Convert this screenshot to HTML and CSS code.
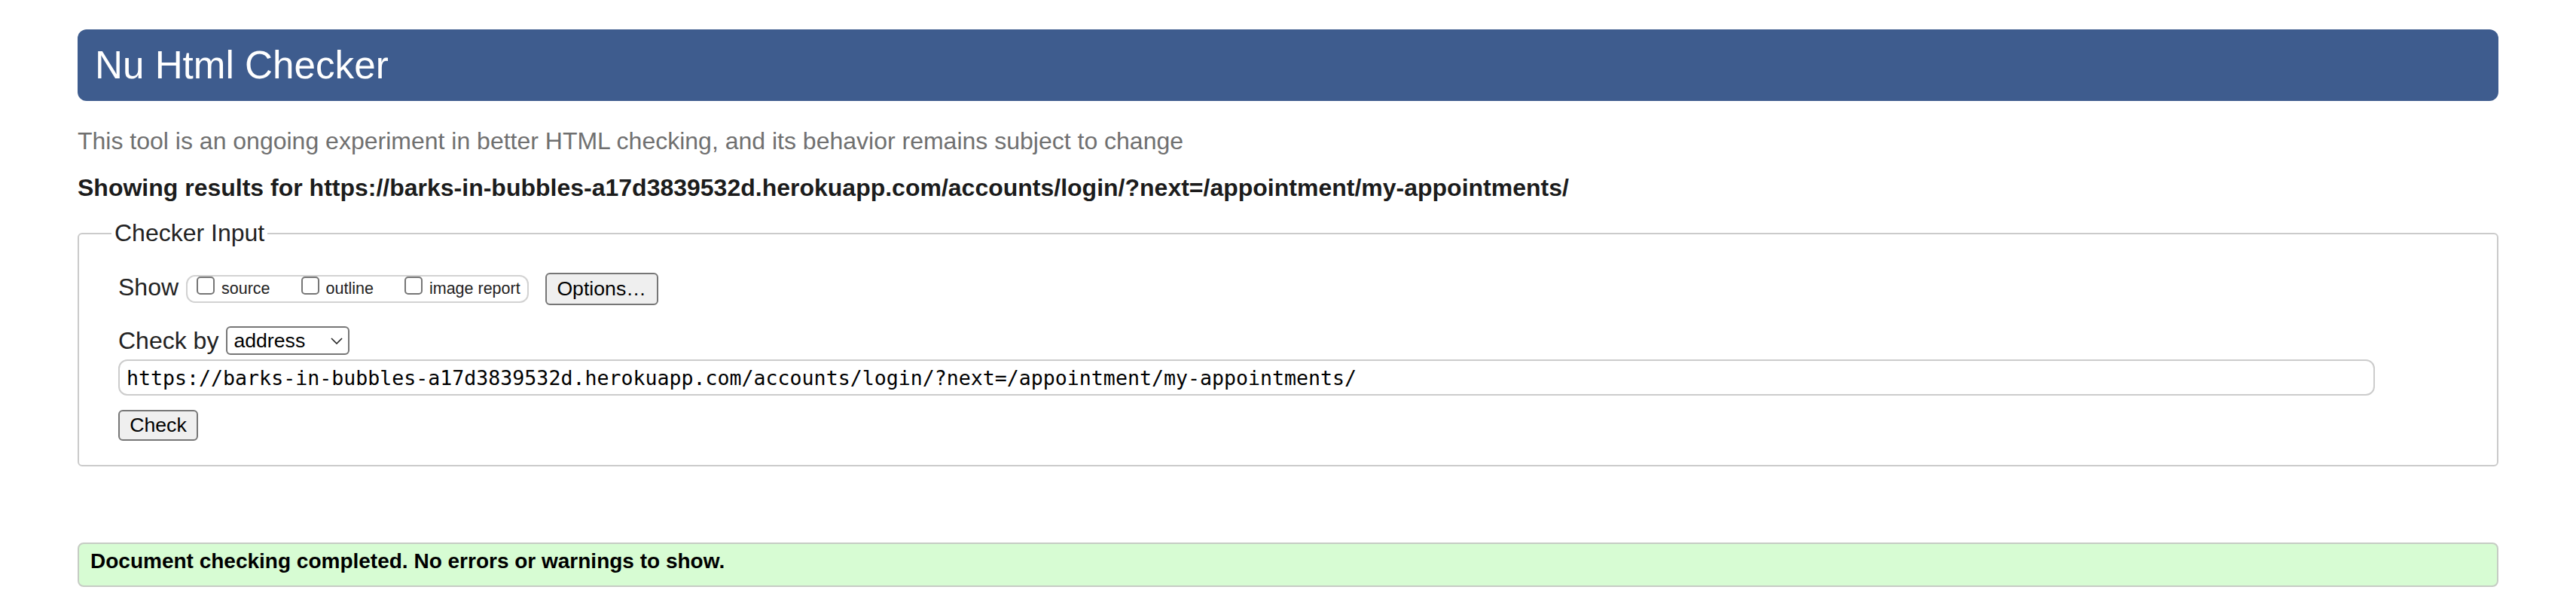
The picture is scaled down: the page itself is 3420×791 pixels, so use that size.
FILE: index.html
```html
<!DOCTYPE html>
<html lang="en">
<head>
<meta charset="utf-8">
<title>Nu Html Checker</title>
<link rel="stylesheet" href="styles.css">
</head>
<body>
<div class="page">
  <h1 class="title">Nu Html Checker</h1>
  <p class="subtitle">This tool is an ongoing experiment in better HTML checking, and its behavior remains subject to change</p>
  <p class="showing">Showing results for https://barks-in-bubbles-a17d3839532d.herokuapp.com/accounts/login/?next=/appointment/my-appointments/</p>
  <form class="checker">
    <fieldset class="fs">
      <legend class="fs-legend">Checker Input</legend>
      <div class="row row-show">
        <span class="lbl lbl-show">Show</span>
        <span class="opts">
          <label class="opt"><input type="checkbox" class="cb"><span>source</span></label>
          <label class="opt"><input type="checkbox" class="cb"><span>outline</span></label>
          <label class="opt"><input type="checkbox" class="cb"><span>image report</span></label>
        </span>
        <button class="btn btn-options" type="button">Options…</button>
      </div>
      <div class="row row-by">
        <span class="lbl">Check by</span>
        <span class="sel-wrap">
          <select class="sel"><option>address</option></select>
          <svg class="chev" width="16" height="9" viewBox="0 0 16 9"><path d="M1 1 L8 8 L15 1" fill="none" stroke="#222" stroke-width="1.6"/></svg>
        </span>
      </div>
      <div class="row row-url">
        <input class="url" type="text" value="https://barks-in-bubbles-a17d3839532d.herokuapp.com/accounts/login/?next=/appointment/my-appointments/">
      </div>
      <div class="row row-check">
        <button class="btn btn-check" type="button">Check</button>
      </div>
    </fieldset>
  </form>
  <p class="success">Document checking completed. No errors or warnings to show.</p>
</div>
</body>
</html>
```
FILE: styles.css
```css
html, body {
  margin: 0;
  padding: 0;
  background: #fff;
}

body {
  font-family: "Liberation Sans", Arial, Helvetica, sans-serif;
  font-size: 32px;
  color: #222;
}

.page {
  padding: 39px 103px 0;
}

.title {
  margin: 0;
  height: 95px;
  box-sizing: border-box;
  display: flex;
  align-items: center;
  padding-left: 23px;
  background: #3e5c8e;
  color: #fff;
  font-weight: normal;
  font-size: 51.2px;
  border-radius: 12px;
}

.subtitle {
  margin: 35px 0 0;
  color: #707070;
  font-size: 32px;
}

.showing {
  margin: 25px 0 0;
  font-weight: bold;
  font-size: 32px;
  color: #1c1c1c;
}

.checker {
  margin: 23px 0 0;
}

.fs {
  margin: 0;
  border: 2px solid #cbcbcb;
  border-radius: 6px;
  padding: 34px 20px 32px 52px;
  min-width: 0;
}

.fs-legend {
  padding: 0 4px;
  margin-left: -9px;
  font-size: 32px;
  color: #222;
}

.row {
  display: flex;
  align-items: center;
}

.lbl {
  font-size: 32px;
  color: #222;
}

.lbl-show {
  margin-bottom: 5px;
}

.opts {
  display: inline-flex;
  align-items: center;
  gap: 41px;
  height: 37px;
  box-sizing: border-box;
  margin-left: 10px;
  padding: 0 9px 0 12px;
  border: 2px solid #d2d2d2;
  border-radius: 12px;
}

.opt {
  display: flex;
  align-items: center;
  gap: 9px;
  font-size: 21.5px;
  color: #222;
}

.cb {
  appearance: none;
  -webkit-appearance: none;
  width: 24px;
  height: 24px;
  margin: 0 0 9px 0;
  border: 2px solid #767676;
  border-radius: 5px;
  background: #fff;
  box-sizing: border-box;
}

.btn {
  font-family: "Liberation Sans", Arial, Helvetica, sans-serif;
  font-size: 26.67px;
  color: #000;
  background: #efefef;
  border: 2px solid #767676;
  border-radius: 6px;
  box-sizing: border-box;
  margin: 0;
}

.btn-options {
  margin-left: 22px;
  width: 150px;
  height: 43px;
  padding: 0;
}

.row-by {
  margin-top: 28px;
}

.sel-wrap {
  position: relative;
  display: inline-block;
  margin-left: 10px;
}

.sel {
  appearance: none;
  -webkit-appearance: none;
  display: block;
  width: 164px;
  height: 38px;
  box-sizing: border-box;
  margin: 0;
  padding: 0 0 0 8px;
  border: 2px solid #767676;
  border-radius: 6px;
  background: #fff;
  color: #000;
  font-family: "Liberation Sans", Arial, Helvetica, sans-serif;
  font-size: 26.67px;
}

.chev {
  position: absolute;
  right: 9px;
  top: 15px;
  pointer-events: none;
}

.row-url {
  margin-top: 6px;
}

.url {
  width: 2996px;
  height: 48px;
  box-sizing: border-box;
  margin: 0;
  padding: 0 0 0 9px;
  border: 2px solid #cccccc;
  border-radius: 12px;
  background: #fff;
  color: #000;
  font-family: "DejaVu Sans Mono", "Liberation Mono", monospace;
  font-size: 26.6px;
}

.row-check {
  margin-top: 19px;
}

.btn-check {
  width: 106px;
  height: 41px;
  padding: 0;
}

.success {
  margin: 101px 0 0;
  height: 59px;
  box-sizing: border-box;
  padding: 7px 0 0 15px;
  background: #d7fcd3;
  border: 2px solid #c6ccc4;
  border-radius: 8px;
  font-weight: bold;
  font-size: 28px;
  color: #000;
}
```
